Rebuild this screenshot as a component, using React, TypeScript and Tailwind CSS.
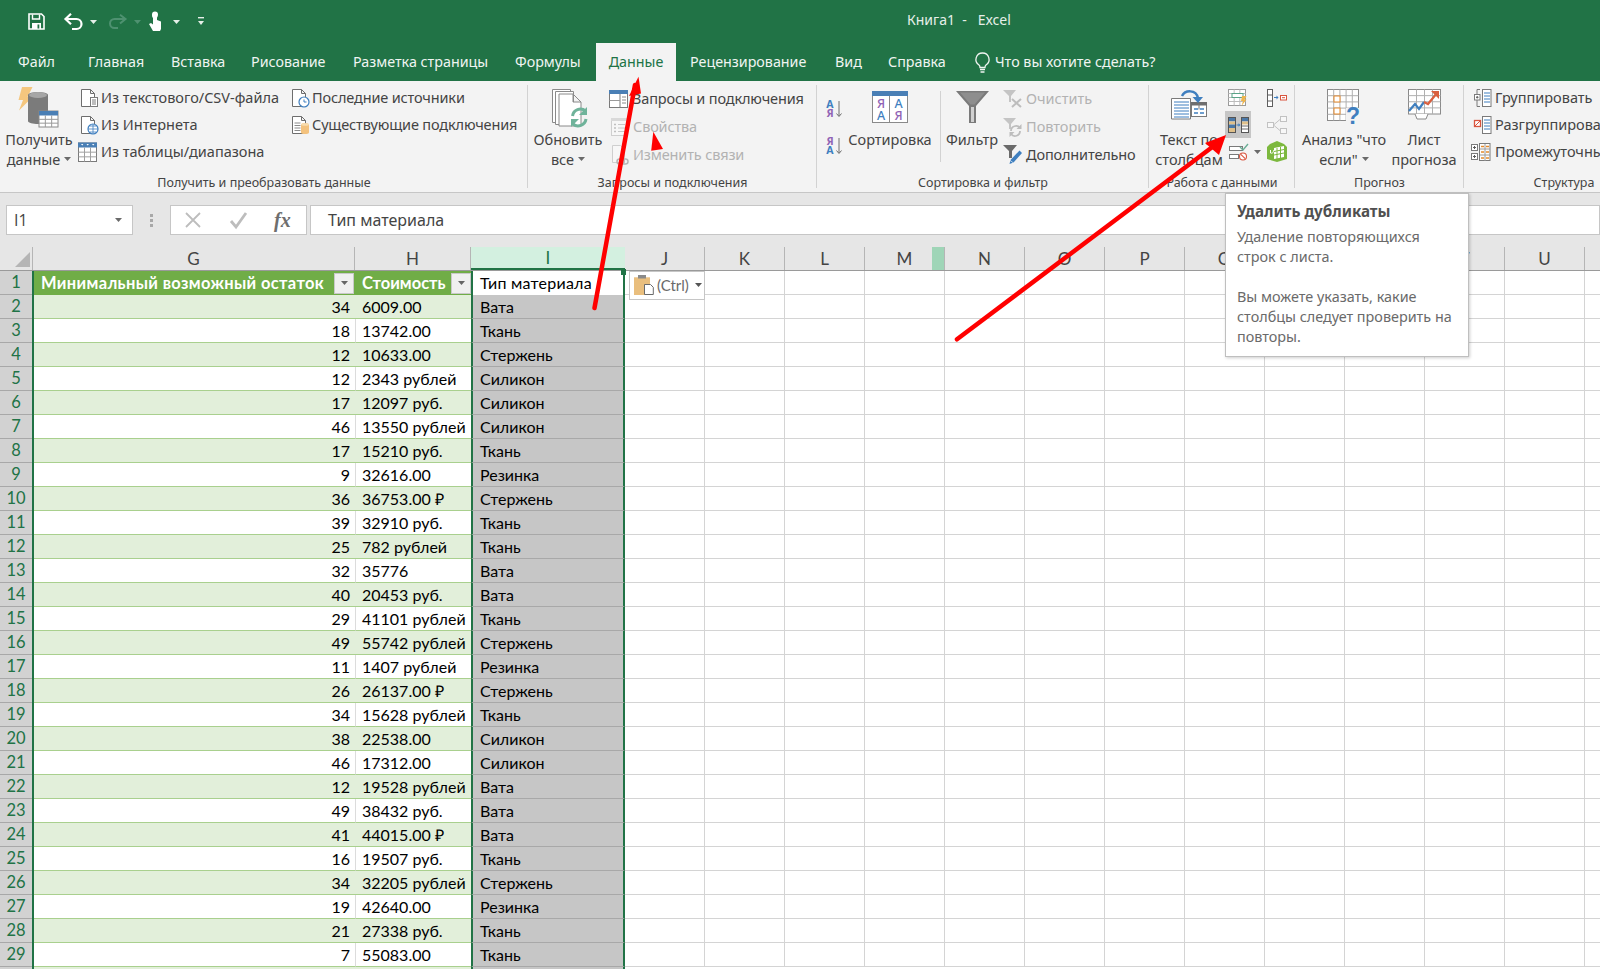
import React from "react";

const UI = "font-['Noto_Sans',sans-serif]";
const CELL = "font-['Lato',sans-serif]";

type SP = { w: number; h: number; children: React.ReactNode; className?: string };
function S({ w, h, children, className }: SP) {
  return (
    <svg width={w} height={h} viewBox={`0 0 ${w} ${h}`} className={"block shrink-0 overflow-visible " + (className ?? "")} fill="none">
      {children}
    </svg>
  );
}
const BLUE = "#4a7fb5";

function Caret({ c = "#6a6a6a", className = "" }: { c?: string; className?: string }) {
  return (
    <svg width="7" height="4" viewBox="0 0 7 4" className={"inline-block shrink-0 " + className}>
      <path d="M0 0h7L3.500 4z" fill={c} />
    </svg>
  );
}

const Page = ({ c = "#6e6e6e" }: { c?: string }) => (
  <path d="M1.500 1.500h9l4 4v13h-13z M10.500 1.500v4h4" stroke={c} strokeWidth="1" fill="#fff" />
);

function GridLines({ x, y, w, h, cols, rows, c = "#9a9a9a" }: { x: number; y: number; w: number; h: number; cols: number; rows: number; c?: string }) {
  const out: React.ReactNode[] = [];
  for (let i = 1; i < cols; i++) out.push(<path key={"c" + i} d={`M${x + (w * i) / cols} ${y}v${h}`} stroke={c} strokeWidth="1" />);
  for (let i = 1; i < rows; i++) out.push(<path key={"r" + i} d={`M${x} ${y + (h * i) / rows}h${w}`} stroke={c} strokeWidth="1" />);
  return <>{out}</>;
}

const GetDataIcon = () => (
  <S w={42} h={40}>
    <path d="M4 0h10.500L9.500 10h5L1 23.500 5 13H.5z" fill="#f4c67e" />
    <path d="M10 8c0-4 20-4 20 0v26c0 4-20 4-20 0z" fill="#7b7b7b" />
    <ellipse cx="20" cy="8" rx="9" ry="3" fill="#a6a6a6" />
    <rect x="21" y="24" width="19" height="16" fill="#fff" stroke="#8a8a8a" />
    <rect x="21" y="24" width="19" height="4.500" fill={BLUE} />
    <GridLines x={21} y={28.5} w={19} h={11.5} cols={3} rows={3} />
  </S>
);
const TextFileIcon = () => (
  <S w={19} h={20}>
    <Page />
    <rect x="10.500" y="9.500" width="7" height="9" fill="#fff" stroke="#7a7a7a" />
    <path d="M12 12h4M12 14h4M12 16h4" stroke="#7a7a7a" />
  </S>
);
const WebIcon = () => (
  <S w={19} h={20}>
    <Page />
    <circle cx="13" cy="14" r="5" fill="#fff" stroke="#3f7fbf" strokeWidth="1.200" />
    <path d="M8 14h10M13 9v10M10 11h6M10 17h6" stroke="#3f7fbf" strokeWidth=".8" />
  </S>
);
const TableIcon = () => (
  <S w={19} h={20}>
    <rect x=".5" y="1" width="18" height="18.500" fill="#fff" stroke="#7a7a7a" />
    <rect x="0" y="0.5" width="19" height="5" fill={BLUE} />
    <path d="M3 2l1.200 1.500L5.400 2zM8.500 2l1.200 1.500L10.900 2zM14 2l1.200 1.500L16.400 2z" fill="#fff" />
    <GridLines x={0.5} y={5.5} w={18} h={14} cols={3} rows={3} c="#a0a0a0" />
  </S>
);
const RecentIcon = () => (
  <S w={19} h={20}>
    <Page />
    <circle cx="13" cy="14" r="5" fill="#fff" stroke="#3f7fbf" strokeWidth="1.200" />
    <path d="M13 11.500V14h2.500" stroke="#3f7fbf" strokeWidth="1" />
  </S>
);
const ExistingIcon = () => (
  <S w={19} h={20}>
    <Page />
    <path d="M3.500 8h6M3.500 10.500h6M3.500 13h6M3.500 15.500h6" stroke="#8a8a8a" />
    <path d="M10 9.500c0-1.600 8-1.600 8 0v8c0 2-8 2-8 0z" fill="#f3c27e" />
    <ellipse cx="14" cy="9.500" rx="4" ry="1.300" fill="#f8dcae" />
  </S>
);
const RefreshIcon = () => (
  <S w={37} h={38}>
    <path d="M.5.5h18v33H.5z" fill="#fff" stroke="#8a8a8a" />
    <path d="M3.500 2.500h18v33h-18z" fill="#fff" stroke="#8a8a8a" />
    <path d="M7 5h14l8 8v24H7z M21 5v8h8" fill="#fff" stroke="#8a8a8a" />
    <path d="M20.500 27a8 8 0 0 1 13-5" stroke="#6fb39a" strokeWidth="3" />
    <path d="M35 18v8h-8z" fill="#6fb39a" />
    <path d="M34 30a8 8 0 0 1-13 5" stroke="#6fb39a" strokeWidth="3" />
    <path d="M19 38v-8h8z" fill="#6fb39a" />
  </S>
);
const QueriesIcon = () => (
  <S w={19} h={18}>
    <rect x=".5" y=".5" width="18" height="17" fill="#fff" stroke="#7a7a7a" />
    <rect width="19" height="4" fill={BLUE} />
    <path d="M11 4v13" stroke="#7a7a7a" />
    <path d="M13 7h4M13 10h4M13 13h4" stroke="#8a8a8a" />
    <GridLines x={.5} y={4} w={10.5} h={13} cols={1} rows={2} />
  </S>
);
const PropsIcon = () => (
  <S w={17} h={18}>
    <rect x=".5" y=".5" width="15" height="17" fill="#f7f7f7" stroke="#cfcfcf" />
    <rect x="0" y="0" width="16" height="3" fill="#d9d9d9" />
    <path d="M3 6.500h2M3 10h2M3 13.500h2" stroke="#c0c0c0" strokeWidth="1.500" />
    <path d="M7 6.500h7M7 10h7M7 13.500h7" stroke="#c8c8c8" />
  </S>
);
const LinksIcon = () => (
  <S w={19} h={20}>
    <path d="M1.500.5h8l4 4v13h-12z" fill="#f7f7f7" stroke="#cfcfcf" />
    <rect x="6" y="14" width="7" height="5" rx="2.500" stroke="#b5b5b5" strokeWidth="1.500" fill="none" />
    <rect x="10" y="14" width="7" height="5" rx="2.500" stroke="#b5b5b5" strokeWidth="1.500" fill="none" />
  </S>
);
const L = ({ x, y, c, t, s = 10, b = false }: { x: number; y: number; c: string; t: string; s?: number; b?: boolean }) => (
  <text x={x} y={y} fill={c} fontSize={s} fontWeight={b ? 700 : 500} fontFamily="'Noto Sans',sans-serif" textAnchor="middle">
    {t}
  </text>
);
const P = "#8f62b5";
const A = "#3f7fbf";
const SortAZ = ({ flip = false }: { flip?: boolean }) => (
  <S w={18} h={20}>
    <L x={5} y={9} c={flip ? P : A} t={flip ? "Я" : "А"} s={10.5} b />
    <L x={5} y={17.5} c={flip ? A : P} t={flip ? "А" : "Я"} s={10.5} b />
    <path d="M14 2v15M11.500 14.500l2.500 3 2.500-3" stroke="#6e6e6e" strokeWidth="1" />
  </S>
);
const BigSort = () => (
  <S w={36} h={32}>
    <rect x=".5" y=".5" width="35" height="31" fill="#fff" stroke="#8a8a8a" />
    <rect width="36" height="5" fill={BLUE} />
    <path d="M17.500 5v26" stroke="#8a8a8a" />
    <L x={9} y={17} c={P} t="Я" s={12.5} />
    <L x={9} y={29} c={A} t="А" s={12.5} />
    <L x={26.5} y={17} c={A} t="А" s={12.5} />
    <L x={26.5} y={29} c={P} t="Я" s={12.5} />
  </S>
);
const Funnel = () => (
  <S w={33} h={32}>
    <path d="M0 0h33L20 15v17h-7V15z" fill="#7a7a7a" />
    <path d="M4 1.500h25L18.500 13.500h-4z" fill="#8e8e8e" />
    <path d="M15 16h3v15h-3z" fill="#d0d0d0" />
  </S>
);
const ClearIcon = () => (
  <S w={20} h={20}>
    <path d="M0 1h13L8 7v6H6V7z" fill="#c4c4c4" />
    <path d="M9 10l9 8M18 10l-9 8" stroke="#bdbdbd" strokeWidth="2" />
  </S>
);
const ReapplyIcon = () => (
  <S w={20} h={20}>
    <path d="M0 1h13L8 7v5H6V7z" fill="#c4c4c4" />
    <path d="M8 14a5 5 0 0 1 9-3M17 14a5 5 0 0 1-9 3" stroke="#bdbdbd" strokeWidth="1.800" />
    <path d="M18.500 7v5h-5zM6.500 20v-5h5z" fill="#bdbdbd" />
  </S>
);
const AdvIcon = () => (
  <S w={20} h={20}>
    <path d="M0 0h14L9 6v7H6V6z" fill="#6a6a6a" />
    <path d="M16.500 5.500l2.500 2.500-8.500 9.500-4 1.500 1-4z" fill="#3f7fbf" />
    <path d="M6.500 15l4 3" stroke="#fff" strokeWidth=".6" />
  </S>
);
const TextColsIcon = () => (
  <S w={37} h={32}>
    <path d="M.5 9.500h19V30H.5z" fill="#fff" stroke="#7a7a7a" />
    <path d="M3 13h15M3 16h15M3 19h15M3 22h15M3 25h15M3 28h15" stroke={A} />
    <rect x="20.500" y="13.500" width="15" height="14" fill="#fff" stroke="#7a7a7a" />
    <rect x="20" y="13" width="16" height="3.500" fill="#6e6e6e" />
    <path d="M23 20h4M29 20h4M23 24h4M29 24h4" stroke={A} strokeWidth="1.500" />
    <path d="M28 20.500v-6" stroke="#7a7a7a" />
    <path d="M11 7c3-6 14-7 16 2" stroke={A} strokeWidth="2.500" />
    <path d="M21.500 8h10.500l-5 6z" fill={A} />
  </S>
);
const FlashIcon = () => (
  <S w={19} h={18}>
    <rect x=".5" y=".5" width="17" height="16" fill="#fff" stroke="#9a9a9a" />
    <GridLines x={.5} y={.5} w={17} h={16} cols={3} rows={4} c="#bcbcbc" />
    <rect x="4" y="4.500" width="11" height="4" fill="#fff" stroke="#5aa488" />
    <path d="M14 7h4.500l-2 3.500h2l-5 6.500 1.500-5h-2z" fill="#efb54c" />
  </S>
);
const RemoveDupIcon = () => (
  <S w={21} h={16}>
    <rect x=".5" y=".5" width="7" height="15" fill="#fff" stroke="#555555" />
    <rect x="1" y="1" width="6" height="3.500" fill="#4a78a8" />
    <rect x="1" y="4.500" width="6" height="3" fill="#dfc08a" />
    <rect x="1" y="7.500" width="6" height="3.500" fill="#4a78a8" />
    <rect x="1" y="11" width="6" height="4" fill="#dfc08a" />
    <rect x="13.500" y=".5" width="7" height="15" fill="#fff" stroke="#555555" />
    <rect x="14" y="1" width="6" height="3.500" fill="#4a78a8" />
    <rect x="14" y="4.500" width="6" height="3" fill="#dfc08a" />
    <path d="M14 9h6M14 12h6" stroke="#6a6a6a" />
    <path d="M8.500 8h2.500" stroke="#3f7fbf" strokeWidth="1" />
    <path d="M10.500 6.200v3.600l2-1.800z" fill="#3f7fbf" />
  </S>
);
const ValidIcon = () => (
  <S w={20} h={18}>
    <rect x=".5" y="3.500" width="13" height="4" fill="#fff" stroke="#7a7a7a" />
    <rect x=".5" y="11.500" width="9" height="4" fill="#fff" stroke="#7a7a7a" />
    <path d="M11 4l3 3 5-6" stroke="#6aae96" strokeWidth="1.400" />
    <circle cx="14" cy="13.500" r="3.500" fill="#fff" stroke="#d9553f" strokeWidth="1.100" />
    <path d="M11.800 11.300l4.400 4.400" stroke="#d9553f" strokeWidth="1.100" />
  </S>
);
const ConsolidateIcon = () => (
  <S w={20} h={18}>
    <rect x=".5" y=".5" width="5" height="17" fill="#fff" stroke="#5e5e5e" />
    <path d="M1 6h4M1 12h4" stroke="#5e5e5e" />
    <path d="M7 8.500h4" stroke={A} />
    <path d="M9.500 6.500v4l2-2z" fill={A} />
    <rect x="13.500" y="6.500" width="6" height="4.500" fill="#fff" stroke="#d9553f" />
    <path d="M15 8.700h3" stroke="#d9553f" />
  </S>
);
const RelIcon = () => (
  <S w={20} h={18}>
    <g stroke="#c2c2c2" fill="#f8f8f8">
      <rect x=".5" y="6.500" width="6" height="5" />
      <rect x="13.500" y=".5" width="6" height="5" />
      <rect x="13.500" y="12.500" width="6" height="5" />
      <path d="M6.500 9l7-6M6.500 9l7 6" fill="none" />
    </g>
  </S>
);
const ModelIcon = () => (
  <S w={20} h={21}>
    <path d="M3 3l7-3 7 3 3 3v12l-10 3-10-3V6z" fill="#7cb83e" />
    <path d="M7 7l10-2v11l-10 2z" fill="#fff" />
    <path d="M10 7v11M13.500 6v11M7 10.500l10-2M7 14l10-2" stroke="#7cb83e" />
    <path d="M3.500 9v3c3 1 3-2 3-3" stroke="#fff" fill="none" />
  </S>
);
const WhatIfIcon = () => (
  <S w={34} h={37}>
    <rect x=".5" y=".5" width="31" height="31" fill="#fff" stroke="#8a8a8a" />
    <GridLines x={.5} y={.5} w={31} h={31} cols={5} rows={5} c="#b0b0b0" />
    <rect x="7" y="7" width="6" height="6" fill="#fff" stroke="#e58a2c" />
    <rect x="7" y="19" width="6" height="6" fill="#fff" stroke="#e58a2c" />
    <rect x="19" y="19" width="15" height="18" fill="#f3f3f3" />
    <text x="26" y="35" fontSize="23" fontWeight="700" fill="#3f7fbf" textAnchor="middle" fontFamily="'Liberation Sans',sans-serif">?</text>
  </S>
);
const ForecastIcon = () => (
  <S w={33} h={32}>
    <rect x=".5" y=".5" width="32" height="24.500" fill="#fff" stroke="#8a8a8a" />
    <GridLines x={.5} y={.5} w={32} h={24.5} cols={4} rows={4} c="#b0b0b0" />
    <path d="M1 22l6-7 4 5 5-7" stroke="#3f7fbf" strokeWidth="2.200" />
    <path d="M16 13l4 2 9-11" stroke="#d9603f" strokeWidth="2.200" />
    <path d="M23 2h8v8z" fill="#d9603f" />
    <path d="M7 25l2 5h9l2-5" stroke="#8a8a8a" fill="#fff" />
  </S>
);
const GroupIcon = () => (
  <S w={18} h={18}>
    <path d="M6 .5H3v17h3" stroke="#7a7a7a" />
    <rect x=".5" y="5.500" width="5.500" height="5.500" fill="#fff" stroke="#7a7a7a" />
    <path d="M2 8.300h2.500M3.200 7v2.500" stroke="#5a5a5a" />
    <rect x="8.500" y=".5" width="8.500" height="17" fill="#fff" stroke="#7a7a7a" />
    <path d="M10 4h6M10 7h6M10 10h6M10 13h6" stroke={A} />
  </S>
);
const UngroupIcon = () => (
  <S w={18} h={18}>
    <rect x=".5" y="4.500" width="6" height="6" fill="#fff" stroke="#d9553f" strokeWidth="1.300" />
    <path d="M1 10l5-5" stroke="#d9553f" />
    <rect x="8.500" y=".5" width="8.500" height="17" fill="#fff" stroke="#7a7a7a" />
    <path d="M10 4h6M10 7h6M10 10h6M10 13h6" stroke={A} />
  </S>
);
const SubIcon = () => (
  <S w={20} h={18}>
    <rect x=".5" y="1.500" width="6" height="6" fill="#fff" stroke="#7a7a7a" />
    <rect x=".5" y="10.500" width="6" height="6" fill="#fff" stroke="#7a7a7a" />
    <path d="M2 4.500h3M3.500 3v3M2 13.500h3M3.500 12v3" stroke="#5a5a5a" />
    <rect x="8.500" y=".5" width="10.500" height="17" fill="#fff" stroke="#7a7a7a" />
    <path d="M14 1v17M9 6h10M9 12h10" stroke="#9a9a9a" />
    <path d="M10 3.500h3M15 3.500h3M10 9h3M15 9h3M10 15h3M15 15h3" stroke="#e58a2c" strokeWidth="1.500" />
  </S>
);

function TopIcons() {
  return (
    <div className="flex items-center h-full">
      <S w={17} h={17} className="ml-[28px]">
        <path d="M1 1h12.500L16 3.500V16H1z" stroke="#fff" strokeWidth="1.600" />
        <path d="M4.500 1.500v4.500h7V1.500" stroke="#fff" strokeWidth="1.400" />
        <path d="M4 16v-6h9v6" fill="#fff" />
        <rect x="9.500" y="11.500" width="1.800" height="4" fill="#217346" />
      </S>
      <S w={19} h={17} className="ml-[19px]">
        <path d="M2 6h10.500a4.500 4.500 0 0 1 0 10H8" stroke="#fff" strokeWidth="2.200" />
        <path d="M7 .8L1.500 6 7 11.200" stroke="#fff" strokeWidth="2.200" />
      </S>
      <Caret c="#e6efe9" className="ml-[7px]" />
      <S w={19} h={15} className="ml-[11px]">
        <path d="M17 5H6.500a4 4 0 0 0 0 9H10" stroke="#4e9170" strokeWidth="2" />
        <path d="M12 .8L17.500 5 12 9.500" stroke="#4e9170" strokeWidth="2" />
      </S>
      <Caret c="#4e9170" className="ml-[7px]" />
      <S w={13} h={18} className="ml-[8px]">
        <path d="M3 1.500a3 3 0 0 1 6 0c0 2-1 2.500-1 3.500v2l4 1.500V16l-1 2H4L0 11l2-1 2 1.500V5C3 4 3 3 3 1.500z" fill="#fff" />
      </S>
      <Caret c="#e6efe9" className="ml-[11px]" />
      <S w={6} h={9} className="ml-[18px]">
        <path d="M0 0h6v1.400H0z" fill="#e6efe9" />
        <path d="M0 4h6L3 8z" fill="#e6efe9" />
      </S>
    </div>
  );
}

const TABS: [string, number][] = [
  ["Файл", 70],
  ["Главная", 83],
  ["Вставка", 80],
  ["Рисование", 102],
  ["Разметка страницы", 162],
  ["Формулы", 81],
];
const TABS2: [string, number][] = [
  ["Рецензирование", 145],
  ["Вид", 53],
  ["Справка", 87],
];

function ListRow({ icon, text, h = 27, disabled = false, box = 23, tight = false }: { icon: React.ReactNode; text: string; h?: number; disabled?: boolean; box?: number; tight?: boolean }) {
  return (
    <div className="flex items-center whitespace-nowrap" style={{ height: h }}>
      <div className="flex items-center justify-start shrink-0" style={{ width: box }}>{icon}</div>
      <span className={(disabled ? "text-[#b2b2b2]" : "text-[#444444]") + (tight ? " tracking-[-0.15px]" : "")}>{text}</span>
    </div>
  );
}

function BigBtn({ icon, l1, l2, width, caret = false, pt = 3 }: { icon: React.ReactNode; l1: string; l2: string; width: number; caret?: boolean; pt?: number }) {
  return (
    <div className="flex flex-col items-center shrink-0" style={{ width }}>
      <div className="h-[45px] flex justify-center items-start w-full" style={{ paddingTop: pt }}>{icon}</div>
      <div className="leading-[20px] text-[#444444] whitespace-nowrap">{l1}</div>
      <div className="leading-[20px] text-[#444444] whitespace-nowrap flex items-center gap-[4px]">
        {l2}
        {caret && <Caret />}
      </div>
    </div>
  );
}

function Group({ width, label, children, sep = true }: { width: number; label: string; children: React.ReactNode; sep?: boolean }) {
  return (
    <div className="relative flex flex-col shrink-0 pt-[3px]" style={{ width }}>
      <div className="flex h-[90px]">{children}</div>
      <div className="h-[18px] leading-[18px] text-center text-[12.5px] text-[#444444] whitespace-nowrap">{label}</div>
      {sep && <div className="absolute right-0 top-[4px] bottom-[4px] w-px bg-[#d2d2d2]" />}
    </div>
  );
}

function Ribbon() {
  return (
    <div className="h-[111px] bg-[#f3f3f3] flex text-[14.5px] overflow-hidden">
      <Group width={528} label="Получить и преобразовать данные">
        <div className="ml-[3px]"><BigBtn width={72} icon={<GetDataIcon />} l1="Получить" l2="данные" caret /></div>
        <div className="ml-[3px] w-[210px]">
          <ListRow icon={<span className="ml-[2px]"><TextFileIcon /></span>} text="Из текстового/CSV-файла" />
          <ListRow icon={<span className="ml-[2px]"><WebIcon /></span>} text="Из Интернета" />
          <ListRow icon={<TableIcon />} text="Из таблицы/диапазона" />
        </div>
        <div>
          <ListRow box={24} icon={<span className="ml-[3px]"><RecentIcon /></span>} text="Последние источники" tight />
          <ListRow box={24} icon={<span className="ml-[3px]"><ExistingIcon /></span>} text="Существующие подключения" tight />
        </div>
      </Group>
      <Group width={289} label="Запросы и подключения">
        <div className="ml-[4px]"><BigBtn width={72} icon={<span className="ml-[5px]"><RefreshIcon /></span>} l1="Обновить" l2="все" caret pt={5} /></div>
        <div className="ml-[5px] mt-[1px]">
          <ListRow h={28} box={24} icon={<QueriesIcon />} text="Запросы и подключения" tight />
          <ListRow h={28} box={24} disabled icon={<span className="ml-[2px]"><PropsIcon /></span>} text="Свойства" tight />
          <ListRow h={28} box={24} disabled icon={<span className="ml-[2px]"><LinksIcon /></span>} text="Изменить связи" tight />
        </div>
      </Group>
      <Group width={332} label="Сортировка и фильтр">
        <div className="ml-[8px] w-[21px] flex flex-col gap-[17px] pt-[15px]">
          <SortAZ />
          <SortAZ flip />
        </div>
        <div className="w-[88px]"><BigBtn width={88} icon={<BigSort />} l1="Сортировка" l2="" pt={7} /></div>
        <div className="w-px h-[71px] mt-[7px] ml-[6px] bg-[#d2d2d2]" />
        <div className="ml-[2px]"><BigBtn width={58} icon={<Funnel />} l1="Фильтр" l2="" pt={7} /></div>
        <div className="ml-[2px] mt-[1px]">
          <ListRow h={28} disabled icon={<ClearIcon />} text="Очистить" />
          <ListRow h={28} disabled icon={<ReapplyIcon />} text="Повторить" />
          <ListRow h={28} icon={<AdvIcon />} text="Дополнительно" tight />
        </div>
      </Group>
      <Group width={146} label="Работа с данными">
        <div className="ml-[5px]"><BigBtn width={70} icon={<TextColsIcon />} l1="Текст по" l2="столбцам" pt={5} /></div>
        <div className="ml-[1px] w-[38px]">
          <div className="h-[27px] flex items-center pl-[3px]"><FlashIcon /></div>
          <div className="h-[27px] w-[26px] bg-[#c6c6c6] flex items-center justify-center"><RemoveDupIcon /></div>
          <div className="h-[27px] flex items-center pl-[4px] gap-[5px]"><ValidIcon /><Caret /></div>
        </div>
        <div className="ml-[4px] w-[22px]">
          <div className="h-[27px] flex items-center"><ConsolidateIcon /></div>
          <div className="h-[27px] flex items-center"><RelIcon /></div>
          <div className="h-[27px] flex items-center"><ModelIcon /></div>
        </div>
      </Group>
      <Group width={169} label="Прогноз">
        <div className="ml-[5px]"><BigBtn width={88} icon={<WhatIfIcon />} l1={'Анализ "что'} l2={'если"'} caret pt={5} /></div>
        <BigBtn width={72} icon={<ForecastIcon />} l1="Лист" l2="прогноза" pt={5} />
      </Group>
      <Group width={200} label="Структура" sep={false}>
        <div className="ml-[7px]">
          <ListRow box={24} icon={<span className="ml-[3px]"><GroupIcon /></span>} text="Группировать" />
          <ListRow box={24} icon={<span className="ml-[3px]"><UngroupIcon /></span>} text="Разгруппировать" />
          <ListRow box={24} icon={<SubIcon />} text="Промежуточный итог" />
        </div>
      </Group>
    </div>
  );
}

function FormulaBar() {
  return (
    <div className="h-[55px] bg-[#e6e6e6] border-t border-[#c6c6c6] flex items-start pt-[12px]">
      <div className="ml-[6px] w-[127px] h-[30px] bg-white border border-[#c6c6c6] flex items-center justify-between pl-[7px] pr-[10px] text-[16px] text-[#444444] font-['Open_Sans',sans-serif]">
        <span>I1</span>
        <Caret />
      </div>
      <div className="w-[37px] h-[30px] flex flex-col items-center justify-center gap-[2px]">
        <i className="w-[3px] h-[3px] bg-[#a8a8a8]" />
        <i className="w-[3px] h-[3px] bg-[#a8a8a8]" />
        <i className="w-[3px] h-[3px] bg-[#a8a8a8]" />
      </div>
      <div className="w-[137px] h-[30px] bg-white border border-[#c6c6c6] flex items-center">
        <S w={16} h={16} className="ml-[14px]"><path d="M1 1l14 14M15 1L1 15" stroke="#bdbdbd" strokeWidth="1.800" /></S>
        <S w={17} h={16} className="ml-[29px]"><path d="M1 9l5 6L16 1" stroke="#bdbdbd" strokeWidth="2.800" /></S>
        <span className="ml-[27px] text-[20px] font-bold italic text-[#6e6e6e] font-['Liberation_Serif',serif]">fx</span>
      </div>
      <div className="ml-[3px] flex-1 h-[30px] bg-white border border-[#c6c6c6] flex items-center pl-[17px] text-[16px] text-[#444444]">
        Тип материала
      </div>
    </div>
  );
}

type Row = [number, string, string];
const DATA: Row[] = [
  [34, "6009.00", "Вата"],
  [18, "13742.00", "Ткань"],
  [12, "10633.00", "Стержень"],
  [12, "2343 рублей", "Силикон"],
  [17, "12097 руб.", "Силикон"],
  [46, "13550 рублей", "Силикон"],
  [17, "15210 руб.", "Ткань"],
  [9, "32616.00", "Резинка"],
  [36, "36753.00 ₽", "Стержень"],
  [39, "32910 руб.", "Ткань"],
  [25, "782 рублей", "Ткань"],
  [32, "35776", "Вата"],
  [40, "20453 руб.", "Вата"],
  [29, "41101 рублей", "Ткань"],
  [49, "55742 рублей", "Стержень"],
  [11, "1407 рублей", "Резинка"],
  [26, "26137.00 ₽", "Стержень"],
  [34, "15628 рублей", "Ткань"],
  [38, "22538.00", "Силикон"],
  [46, "17312.00", "Силикон"],
  [12, "19528 рублей", "Вата"],
  [49, "38432 руб.", "Вата"],
  [41, "44015.00 ₽", "Вата"],
  [16, "19507 руб.", "Ткань"],
  [34, "32205 рублей", "Стержень"],
  [19, "42640.00", "Резинка"],
  [21, "27338 руб.", "Ткань"],
  [7, "55083.00", "Ткань"],
];
const RIGHT = ["J", "K", "L", "M", "N", "O", "P", "Q", "R", "S", "T", "U", ""];

function Blanks() {
  return (
    <>
      {RIGHT.map((c) => (
        <div key={c} className="w-[80px] shrink-0 border-r border-b border-[#d4d4d4] bg-white" />
      ))}
    </>
  );
}
function RowNum({ n }: { n: number }) {
  return (
    <div className="w-[33px] shrink-0 h-full bg-[#d2d2d2] border-b border-r border-[#a8a8a8] flex items-center justify-center text-[#217346] text-[16.5px]">
      {n}
    </div>
  );
}
function FilterBtn() {
  return (
    <div className="w-[20px] h-[21px] bg-[#f0f0f0] border border-[#c9c9c9] flex items-center justify-center shrink-0">
      <Caret c="#666666" />
    </div>
  );
}

function Sheet() {
  return (
    <div className={"flex-1 overflow-hidden text-[16px] text-black bg-white relative " + CELL}>
      <div className="h-[24px] flex bg-[#e6e6e6] border-b border-[#9a9a9a] text-[#444444] text-[17px]">
        <div className="w-[33px] shrink-0 border-r border-[#b5b5b5] flex items-end justify-end pr-[2px] pb-[3px]">
          <svg width="15" height="15" viewBox="0 0 15 15"><path d="M15 0v15H0z" fill="#b5b5b5" /></svg>
        </div>
        <div className="w-[322px] shrink-0 flex items-center justify-center border-r border-[#b5b5b5]">G</div>
        <div className="w-[116px] shrink-0 flex items-center justify-center border-r border-[#b5b5b5]">H</div>
        <div className="w-[154px] shrink-0 flex items-center justify-center bg-[#d3f0e0] text-[#217346] border-b-2 border-[#217346]">I</div>
        {RIGHT.map((c) => (
          <div key={c} className="relative w-[80px] shrink-0 flex items-center justify-center border-r border-[#b5b5b5]">
            {c}
            {c === "M" && <div className="absolute right-0 top-0 bottom-0 w-[12px] bg-[#9fd5b7]" />}
          </div>
        ))}
      </div>
      <div className="h-[24px] flex">
        <RowNum n={1} />
        <div className="w-[322px] shrink-0 bg-[#70ad47] text-white font-bold text-[16.5px] tracking-[0.35px] flex items-center justify-between pl-[8px] pr-[1px] whitespace-nowrap">
          <span>Минимальный возможный остаток</span>
          <FilterBtn />
        </div>
        <div className="w-[116px] shrink-0 bg-[#70ad47] text-white font-bold text-[16.5px] flex items-center justify-between pl-[7px] whitespace-nowrap">
          <span>Стоимость</span>
          <FilterBtn />
        </div>
        <div className="w-[154px] shrink-0 bg-white flex items-center pl-[7px] whitespace-nowrap tracking-[0.25px] border-x-2 border-[#217346] relative">
          Тип материала
          <i className="absolute -right-[3px] -top-[2px] w-[5px] h-[6px] bg-[#217346]" />
        </div>
        <Blanks />
      </div>
      {DATA.map(([q, price, type], i) => {
        const stripe = i % 2 === 0;
        const n = i + 2;
        return (
          <div key={n} className="h-[24px] flex">
            <RowNum n={n} />
            <div className={"w-[322px] shrink-0 flex items-center justify-end pr-[5px] border-b border-[#a9d08e] " + (stripe ? "bg-[#e2efda]" : "bg-white")}>{q}</div>
            <div className={"w-[116px] shrink-0 flex items-center whitespace-nowrap border-b border-[#a9d08e] " + (stripe ? "bg-[#e2efda] pl-[7px]" : "bg-white border-l border-l-[#dcdcdc] pl-[6px]")}>{price}</div>
            <div className="w-[154px] shrink-0 flex items-center pl-[7px] bg-[#c6c6c6] border-b border-b-[#a8a8a8] border-x-2 border-x-[#217346]">{type}</div>
            <Blanks />
          </div>
        );
      })}
      <div className="h-[24px] flex">
        <RowNum n={30} />
        <div className="w-[322px] shrink-0 bg-[#e2efda]" />
        <div className="w-[116px] shrink-0 bg-[#e2efda]" />
        <div className="w-[154px] shrink-0 bg-[#c6c6c6] border-x-2 border-x-[#217346]" />
      </div>
      <div className="absolute left-[32px] top-[24px] bottom-0 w-[2px] bg-[#217346]" />
    </div>
  );
}

export default function App() {
  return (
    <div className={"relative w-[1600px] h-[969px] overflow-hidden flex flex-col bg-white " + UI}>
      <div className="bg-[#217346] h-[81px] flex flex-col shrink-0">
        <div className="h-[43px] flex relative">
          <div className="w-[907px] shrink-0"><TopIcons /></div>
          <div className="flex items-center -mt-[5px] text-[14px] text-[#e6efe9] whitespace-pre">{"Книга1  -   Excel"}</div>
        </div>
        <div className="h-[38px] flex text-[14.3px] text-[#f0f5f2]">
          <div className="w-[18px] shrink-0" />
          {TABS.map(([t, w]) => (
            <div key={t} className="shrink-0 whitespace-nowrap flex items-center" style={{ width: w }}>{t}</div>
          ))}
          <div className="w-[80px] shrink-0 bg-[#f3f3f3] text-[#217346] flex items-center justify-center">Данные</div>
          <div className="w-[14px] shrink-0" />
          {TABS2.map(([t, w]) => (
            <div key={t} className="shrink-0 whitespace-nowrap flex items-center" style={{ width: w }}>{t}</div>
          ))}
          <div className="flex items-center gap-[5px] whitespace-nowrap">
            <S w={15} h={21}>
              <path d="M7.500 1a6.500 6.500 0 0 0-3.500 12c.7.6 1 1.500 1 2.500h5c0-1 .3-1.900 1-2.500A6.500 6.500 0 0 0 7.500 1z" stroke="#f0f5f2" strokeWidth="1.300" />
              <path d="M5 17.500h5M5.500 20h4" stroke="#f0f5f2" strokeWidth="1.300" />
            </S>
            Что вы хотите сделать?
          </div>
        </div>
      </div>
      <Ribbon />
      <FormulaBar />
      <Sheet />

      <div className={"absolute left-[629px] top-[271px] w-[76px] h-[28.5px] bg-white border border-[#c6c6c6] flex items-center pl-[4px] gap-[3px] text-[15px] text-[#6a6a6a] " + CELL}>
        <svg width="20" height="20" viewBox="0 0 20 20">
          <path d="M0 2.300h16V20H0z" fill="#e9be7d" />
          <rect x="4" y="0" width="8" height="3.500" fill="#8a8a8a" />
          <path d="M10.500 9.500h6l2.800 2.800V19.500h-8.800z" fill="#fff" stroke="#6a6a6a" />
        </svg>
        <span>(Ctrl)</span>
        <Caret c="#555555" className="ml-[3px]" />
      </div>

      <div className="absolute left-[1225px] top-[193px] w-[244px] h-[164px] bg-white border border-[#bfbfbf] shadow-[1px_1px_3px_rgba(0,0,0,0.2)] pl-[11px] pt-[7px] text-[14.4px] leading-[20px] text-[#6a6a6a]">
        <div className="font-bold text-[15.2px] text-[#505050]">Удалить дубликаты</div>
        <div className="mt-[6px]">Удаление повторяющихся<br />строк с листа.</div>
        <div className="mt-[20px]">Вы можете указать, какие<br />столбцы следует проверить на<br />повторы.</div>
      </div>

      <svg className="absolute inset-0 pointer-events-none" width="1600" height="969" viewBox="0 0 1600 969">
        <path d="M594.500 308 L635 85" stroke="#ff0000" strokeWidth="4.500" strokeLinecap="round" />
        <path d="M638.500 76.700 L629 96 L641 93.500z" fill="#ff0000" />
        <path d="M653.300 131.700 L651.200 150.700 L663 149z" fill="#ff0000" />
        <path d="M957 339.300 L1215 145" stroke="#ff0000" strokeWidth="4.500" strokeLinecap="round" />
        <path d="M1226 135 L1205 143 L1219 155z" fill="#ff0000" />
      </svg>
    </div>
  );
}
